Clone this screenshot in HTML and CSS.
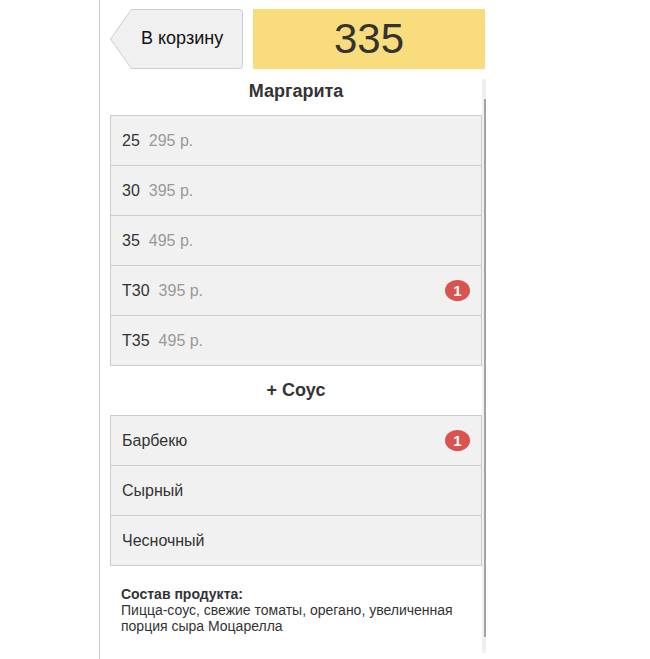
FILE: index.html
```html
<!DOCTYPE html>
<html lang="ru">
<head>
<meta charset="utf-8">
<title>Маргарита</title>
<link rel="stylesheet" href="styles.css">
</head>
<body>
<div class="page">
  <div class="header">
    <button class="back">
      <svg class="back-shape" width="134" height="60" viewBox="0 0 134 60" aria-hidden="true">
        <path d="M21.5 0.5 H129.5 Q132.5 0.5 132.5 3.5 V56.5 Q132.5 59.5 129.5 59.5 H21.5 L0.5 30 Z" fill="#f0f0f0" stroke="#cccccc" stroke-width="1"/>
      </svg>
      <span class="back-label">В корзину</span>
    </button>
    <div class="total">335</div>
  </div>
  <div class="scroll">
    <div class="content">
      <div class="section-title first">Маргарита</div>
      <ul class="list">
        <li class="row"><span class="size">25</span><span class="price">295 р.</span></li>
        <li class="row"><span class="size">30</span><span class="price">395 р.</span></li>
        <li class="row"><span class="size">35</span><span class="price">495 р.</span></li>
        <li class="row"><span class="size">T30</span><span class="price">395 р.</span><span class="badge">1</span></li>
        <li class="row"><span class="size">T35</span><span class="price">495 р.</span></li>
      </ul>
      <div class="section-title">+ Соус</div>
      <ul class="list">
        <li class="row"><span class="size">Барбекю</span><span class="badge">1</span></li>
        <li class="row"><span class="size">Сырный</span></li>
        <li class="row"><span class="size">Чесночный</span></li>
      </ul>
      <div class="composition">
        <div class="composition-title">Состав продукта:</div>
        <div class="composition-text">Пицца-соус, свежие томаты, орегано, увеличенная порция сыра Моцарелла</div>
      </div>
    </div>
    <div class="scrollbar"><div class="thumb"></div></div>
  </div>
</div>
</body>
</html>
```
FILE: styles.css
```css
* { box-sizing: border-box; }
html, body {
  margin: 0;
  padding: 0;
  background: #ffffff;
  font-family: "Liberation Sans", Arial, sans-serif;
  color: #333333;
}
.page {
  margin-left: 99px;
  border-left: 1px solid #cccccc;
  min-height: 659px;
  height: 659px;
  overflow: hidden;
  padding: 9px 0 0 10px;
}
.header {
  display: flex;
  gap: 10px;
  height: 60px;
  margin-bottom: 10px;
}
.back {
  position: relative;
  width: 133px;
  height: 60px;
  padding: 0 0 0 31px;
  margin: 0;
  border: none;
  background: transparent;
  font-family: inherit;
  font-size: 18px;
  color: #111111;
  text-align: left;
  display: flex;
  align-items: center;
  cursor: pointer;
}
.back-shape {
  position: absolute;
  left: 0;
  top: 0;
}
.back-label {
  position: relative;
  margin-top: -1px;
}
.total {
  width: 232px;
  height: 60px;
  background: #f9dc7b;
  font-size: 42px;
  line-height: 60px;
  text-align: center;
  color: #333333;
}
.scroll {
  display: flex;
  align-items: flex-start;
}
.content {
  width: 372px;
}
.scrollbar {
  width: 4px;
  height: 574px;
  background: #f0f0f0;
  padding-top: 20px;
}
.thumb {
  margin-left: 2px;
  width: 2px;
  height: 538px;
  background: #a3a3a3;
}
.section-title {
  font-weight: bold;
  font-size: 18px;
  line-height: 20px;
  text-align: center;
  padding: 14px 0 15px;
  color: #333333;
}
.section-title.first {
  padding: 2px 0 14px;
}
.list {
  list-style: none;
  margin: 0;
  padding: 0;
  border: 1px solid #cccccc;
  background: #f1f1f1;
}
.row {
  display: flex;
  align-items: center;
  height: 50px;
  padding: 0 11px 0 11px;
  border-top: 1px solid #cccccc;
  font-size: 16px;
}
.row:first-child {
  border-top: none;
  height: 49px;
}
.size {
  color: #333333;
}
.price {
  color: #999999;
  margin-left: 9px;
}
.badge {
  margin-left: auto;
  width: 25px;
  height: 21px;
  border-radius: 50%;
  background: #d9534f;
  color: #ffffff;
  font-weight: bold;
  font-size: 15px;
  line-height: 21px;
  text-align: center;
}
.composition {
  padding: 20px 11px 0;
  font-size: 14px;
  line-height: 16px;
  color: #333333;
}
.composition-title {
  font-weight: bold;
}
```
